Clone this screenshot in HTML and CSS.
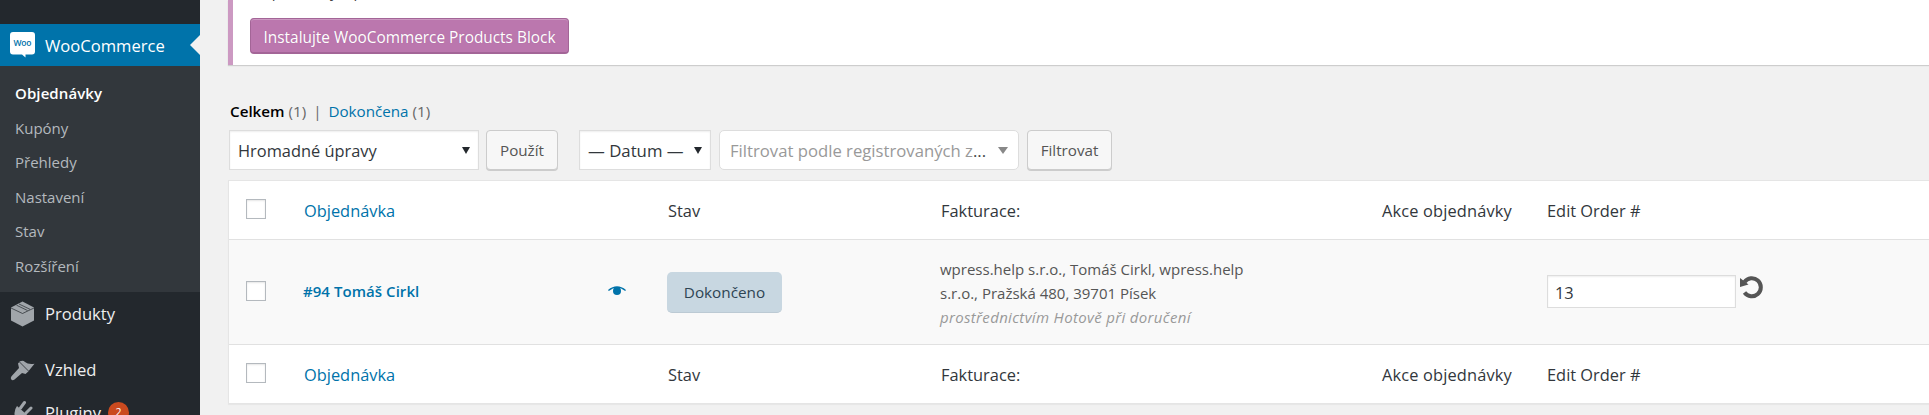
FILE: index.html
```
<!DOCTYPE html>
<html lang="cs">
<head>
  <meta charset="utf-8">
  <title>Objednávky</title>
  <link rel="stylesheet" href="styles.css">
</head>
<body>
  <div class="admin">
    <div class="sidebar">
      <a class="menu-item current">
        <svg class="menu-icon" viewBox="0 0 25 26">
          <path fill="#fff" d="M3 0h19a3 3 0 0 1 3 3v16.500a3 3 0 0 1-3 3h-6.500v3l-3.500-3H3a3 3 0 0 1-3-3V3a3 3 0 0 1 3-3z"/>
          <text class="woo" x="12.5" y="14" text-anchor="middle" textLength="18">Woo</text>
        </svg>
        <span>WooCommerce</span>
      </a>
      <ul class="submenu">
        <li class="active"><a>Objednávky</a></li>
        <li><a>Kupóny</a></li>
        <li><a>Přehledy</a></li>
        <li><a>Nastavení</a></li>
        <li><a>Stav</a></li>
        <li><a>Rozšíření</a></li>
      </ul>
      <a class="menu-item">
        <svg class="menu-icon" viewBox="0 0 25 26">
          <path fill="#a0a5aa" d="M12.500 .5L24 6.500v13L12.500 25.500 1 19.500v-13z"/>
          <path fill="none" stroke="#23282d" stroke-width=".7" d="M1 7l11.500 5.500L24 7M6.500 4.200l11 5.300M9 3l11 5.300"/>
        </svg>
        <span>Produkty</span>
      </a>
      <a class="menu-item separated">
        <svg class="menu-icon" viewBox="0 0 25 26">
          <path fill="#a0a5aa" d="M8 6.500l2-2.200q3-1.500 5 .7 3 2.800 9.500 1.800l-6.500 8-2.500 2.200-3.500-1-7.500 6.500q-2 1.300-3.200 0t.2-3.200L9 11z"/>
          <path stroke="#23282d" stroke-width=".8" d="M9.500 5l9 9"/>
        </svg>
        <span>Vzhled</span>
      </a>
      <a class="menu-item">
        <svg class="menu-icon" viewBox="0 0 25 26">
          <path fill="#a0a5aa" d="M7 6l12.500 11q-5 6-11 4.500l-4 4-2-2 3.500-4Q2.500 12 7 6z"/>
          <path stroke="#a0a5aa" stroke-width="3" stroke-linecap="round" d="M10.500 8l4-5.500M16 13l5-5"/>
        </svg>
        <span>Pluginy</span>
        <span class="count">2</span>
      </a>
    </div>

    <div class="content">
      <div class="notice">
        <p>Už pro bloky a pole</p>
        <a class="button-primary">Instalujte WooCommerce Products Block</a>
      </div>

      <div class="views"><b>Celkem</b> <span>(1)</span> <i>|</i> <a>Dokončena</a> <span>(1)</span></div>

      <div class="filters">
        <div class="select bulk"><span>Hromadné úpravy</span><svg class="arrow" viewBox="0 0 8 7"><path d="M0 0h8L4 7z"/></svg></div>
        <a class="button apply">Použít</a>
        <div class="select date"><span>— Datum —</span><svg class="arrow" viewBox="0 0 8 7"><path d="M0 0h8L4 7z"/></svg></div>
        <div class="select customer"><span>Filtrovat podle registrovaných z<em>...</em></span><svg class="arrow" viewBox="0 0 10 7"><path d="M0 0h10L5 7z"/></svg></div>
        <a class="button filter">Filtrovat</a>
      </div>

      <div class="orders">
        <div class="row head">
          <div><span class="checkbox"></span></div>
          <div class="link">Objednávka</div>
          <div>Stav</div>
          <div>Fakturace:</div>
          <div class="actions">Akce objednávky</div>
          <div>Edit Order #</div>
        </div>
        <div class="row order">
          <div><span class="checkbox"></span></div>
          <div class="number">
            <b>#94 Tomáš Cirkl</b>
            <svg class="eye" viewBox="0 0 18 10"><path fill="none" stroke="#0073aa" stroke-width="1.300" d="M.4 4.600Q9-2.600 17.600 4.600"/><circle cx="9" cy="5" r="4" fill="#0073aa"/></svg>
          </div>
          <div><span class="status">Dokončeno</span></div>
          <div class="billing">
            <p>wpress.help s.r.o., Tomáš Cirkl, wpress.help</p>
            <p>s.r.o., Pražská 480, 39701 Písek</p>
            <p class="via">prostřednictvím Hotově při doručení</p>
          </div>
          <div></div>
          <div class="edit-order">
            <span class="input">13</span>
            <svg class="undo" viewBox="0 0 24 24"><path fill="none" stroke="#555" stroke-width="4" d="M4.500 7a9 9 0 1 1 0 10.500"/><path fill="#555" d="M0 3v9l8.500-2.500z"/></svg>
          </div>
        </div>
        <div class="row head">
          <div><span class="checkbox"></span></div>
          <div class="link">Objednávka</div>
          <div>Stav</div>
          <div>Fakturace:</div>
          <div class="actions">Akce objednávky</div>
          <div>Edit Order #</div>
        </div>
      </div>
    </div>
  </div>
</body>
</html>
```
FILE: styles.css
```
* {
  box-sizing: border-box;
}
body {
  margin: 0;
  background: #f1f1f1;
  color: #444;
  font-family: "Open Sans", "Noto Sans", sans-serif;
  font-size: 15px;
  overflow: hidden;
}
p, ul {
  margin: 0;
  padding: 0;
}
.admin {
  display: flex;
  height: 415px;
  white-space: nowrap;
}

/* Sidebar */
.sidebar {
  width: 200px;
  flex-shrink: 0;
  padding-top: 24px;
  background: #23282d;
  overflow: hidden;
}
.menu-item {
  display: flex;
  align-items: center;
  height: 43px;
  padding-left: 10px;
  color: #eee;
  font-size: 16.6px;
}
.menu-item.current {
  height: 42px;
  background: #0073aa;
  color: #fff;
}
.menu-item.current::after {
  content: "";
  margin-left: auto;
  border: 10px solid transparent;
  border-left: 0;
  border-right-color: #f1f1f1;
}
.menu-item.separated {
  margin-top: 13px;
}
.menu-icon {
  width: 25px;
  height: 26px;
  margin-right: 10px;
}
.woo {
  font: 600 8.5px "Open Sans", sans-serif;
  fill: #0073aa;
}
.submenu {
  height: 226px;
  padding-top: 10px;
  background: #32373c;
  list-style: none;
}
.submenu li {
  height: 34.5px;
  padding-left: 15px;
  color: #b4b9be;
  line-height: 35px;
}
.submenu .active {
  color: #fff;
  font-weight: 600;
  letter-spacing: 0.1px;
}
.count {
  width: 21px;
  height: 21px;
  margin-left: 7px;
  border-radius: 50%;
  background: #ca4a1f;
  color: #fff;
  font-size: 10.5px;
  line-height: 21px;
  text-align: center;
}

/* Content */
.content {
  flex: 1;
  padding-left: 28px;
}
.notice {
  display: flow-root;
  height: 65px;
  padding-left: 17px;
  border-left: 5px solid #cc99c2;
  background: #fff;
  box-shadow: 0 1px 1px rgba(0, 0, 0, 0.15);
}
.notice p {
  height: 24px;
  margin-top: -18px;
  margin-bottom: 12px;
  line-height: 18px;
}
.button-primary {
  display: block;
  width: 319px;
  height: 36px;
  border: 1px solid #a36597;
  border-bottom-width: 2px;
  border-radius: 4px;
  background: #bb77ae;
  box-shadow: inset 0 1px 0 rgba(255, 255, 255, 0.25);
  color: #fff;
  font-size: 15.4px;
  line-height: 37px;
  text-align: center;
  text-shadow: 0 0 1px #a36597;
}
.views {
  height: 65px;
  padding: 35px 0 0 2px;
  line-height: 22px;
  color: #666;
  font-size: 15.2px;
}
.views b {
  color: #000;
  font-weight: 600;
}
.views i {
  margin: 0 3px;
  font-style: normal;
}
.views a, .link {
  color: #0073aa;
}
.filters {
  display: flex;
  height: 50px;
  padding-left: 1px;
}
.select {
  display: flex;
  justify-content: space-between;
  align-items: center;
  height: 40px;
  padding: 0 8px;
  border: 1px solid #ddd;
  background: #fff;
  box-shadow: inset 0 1px 2px rgba(0, 0, 0, 0.07);
  color: #32373c;
  font-size: 16.4px;
}
.arrow {
  width: 8px;
  height: 7px;
  fill: #23282d;
}
.bulk {
  width: 250px;
}
.date {
  width: 132px;
  margin-left: 21px;
  font-size: 16.8px;
}
.customer {
  width: 300px;
  margin-left: 8px;
  padding: 0 10px;
  border-radius: 5px;
  box-shadow: none;
  color: #999;
  font-size: 16.7px;
}
.customer em {
  color: #444;
  font-style: normal;
}
.customer .arrow {
  width: 10px;
  fill: #888;
}
.button {
  height: 40px;
  border: 1px solid #ccc;
  border-radius: 4px;
  background: #f7f7f7;
  box-shadow: 0 1px 0 #ccc;
  color: #555;
  font-size: 15.2px;
  line-height: 38px;
  text-align: center;
}
.apply {
  width: 72px;
  margin-left: 7px;
}
.filter {
  width: 85px;
  margin-left: 8px;
}

/* Orders table */
.orders {
  width: 1740px;
  border: 1px solid #e5e5e5;
  background: #fff;
  box-shadow: 0 1px 1px rgba(0, 0, 0, 0.04);
}
.row {
  display: grid;
  grid-template-columns: 75px 364px 273px 441px 165px 1fr;
  align-items: center;
}
.head {
  height: 58px;
  color: #32373c;
  font-size: 16.4px;
}
.head .link {
  color: #0073aa;
}
.actions {
  letter-spacing: 0.15px;
}
.order {
  height: 106px;
  border-top: 1px solid #e1e1e1;
  border-bottom: 1px solid #e1e1e1;
  background: #f9f9f9;
  color: #555;
}
.checkbox {
  display: block;
  width: 20px;
  height: 20px;
  margin: 0 0 2px 17px;
  border: 1px solid #b4b9be;
  background: #fff;
  box-shadow: inset 0 1px 2px rgba(0, 0, 0, 0.1);
}
.number {
  display: flex;
  align-items: center;
  justify-content: space-between;
  padding-right: 42px;
  padding-bottom: 2px;
  color: #0073aa;
}
.number b {
  margin-left: -1px;
  font-weight: 600;
  letter-spacing: 0.05px;
}
.eye {
  width: 18px;
  height: 10px;
  margin-bottom: 1px;
}
.status {
  display: block;
  width: 115px;
  height: 41px;
  margin-left: -1px;
  border-bottom: 1px solid #bccad4;
  border-radius: 5px;
  background: #c8d7e1;
  color: #2e4453;
  font-size: 15.3px;
  line-height: 41px;
  text-align: center;
}
.billing {
  margin-left: -1px;
  padding-top: 2px;
  line-height: 24.2px;
}
.via {
  color: #999;
  font-style: italic;
  letter-spacing: 0.33px;
}
.edit-order {
  display: flex;
  padding-bottom: 1px;
}
.input {
  width: 189px;
  height: 33px;
  padding-left: 7px;
  border: 1px solid #ddd;
  background: #fff;
  box-shadow: inset 0 1px 2px rgba(0, 0, 0, 0.07);
  color: #32373c;
  font-size: 16.4px;
  line-height: 33px;
}
.undo {
  width: 24px;
  height: 24px;
  margin-left: 4px;
}
```
